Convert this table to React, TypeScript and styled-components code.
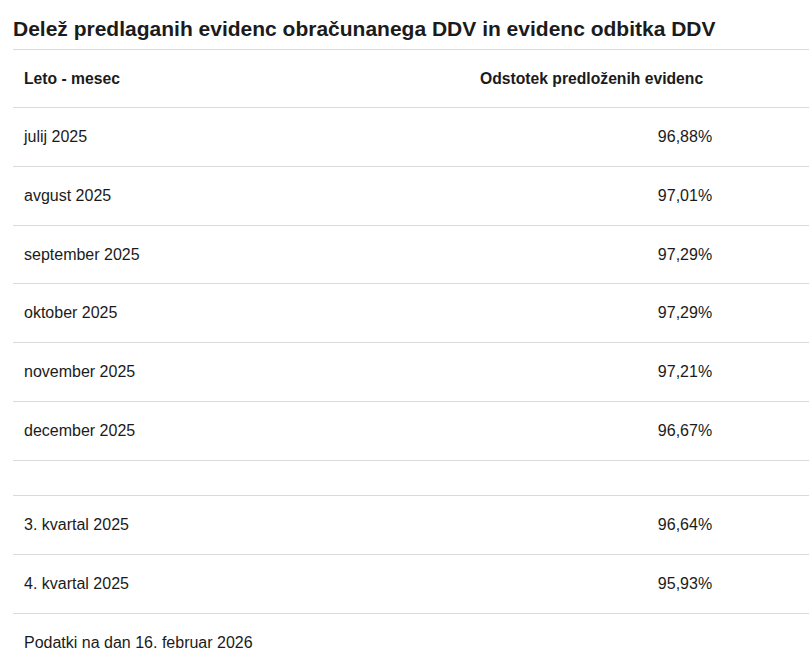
import styled, { createGlobalStyle } from 'styled-components'

const GlobalStyle = createGlobalStyle`
    html, body {
        margin: 0;
        padding: 0;
        background: #ffffff;
        overflow: hidden;
    }
    body {
        font-family: "Liberation Sans", Arial, sans-serif;
        color: #1b1b1b;
    }
`

const Page = styled.div`
    padding-left: 13px;
    overflow: hidden;
`

const Title = styled.h2`
    margin: 0;
    padding: 15px 0 6px;
    font-size: 21px;
    line-height: 28px;
    font-weight: 700;
    white-space: nowrap;
    border-bottom: 1px solid #dadada;
`

const Table = styled.div`
    width: 888px;
`

const Row = styled.div<{ $height: number }>`
    display: grid;
    grid-template-columns: 456px 1fr;
    align-items: center;
    height: ${p => p.$height}px;
    border-bottom: 1px solid #dadada;
`

const Cell = styled.div<{ $head?: boolean; $center?: boolean }>`
    padding: 0 11px;
    font-size: ${p => (p.$head ? '15.7px' : '16px')};
    font-weight: ${p => (p.$head ? 700 : 400)};
    text-align: ${p => (p.$center ? 'center' : 'left')};
    white-space: nowrap;
`

const Note = styled.p`
    margin: 0;
    padding: 19px 11px 0;
    font-size: 16px;
    line-height: 20px;
`

const months = [
    ['julij 2025', '96,88%'],
    ['avgust 2025', '97,01%'],
    ['september 2025', '97,29%'],
    ['oktober 2025', '97,29%'],
    ['november 2025', '97,21%'],
    ['december 2025', '96,67%'],
]

const quarters = [
    ['3. kvartal 2025', '96,64%'],
    ['4. kvartal 2025', '95,93%'],
]

export default function App() {
    return (
        <>
            <GlobalStyle />
            <Page>
                <Title>Delež predlaganih evidenc obračunanega DDV in evidenc odbitka DDV</Title>
                <Table>
                    <Row $height={57}>
                        <Cell $head>Leto - mesec</Cell>
                        <Cell $head>Odstotek predloženih evidenc</Cell>
                    </Row>
                    {months.map(([label, value]) => (
                        <Row $height={57.84} key={label}>
                            <Cell>{label}</Cell>
                            <Cell $center>{value}</Cell>
                        </Row>
                    ))}
                    <Row $height={34} />
                    {quarters.map(([label, value]) => (
                        <Row $height={58} key={label}>
                            <Cell>{label}</Cell>
                            <Cell $center>{value}</Cell>
                        </Row>
                    ))}
                </Table>
                <Note>Podatki na dan 16. februar 2026</Note>
            </Page>
        </>
    )
}
